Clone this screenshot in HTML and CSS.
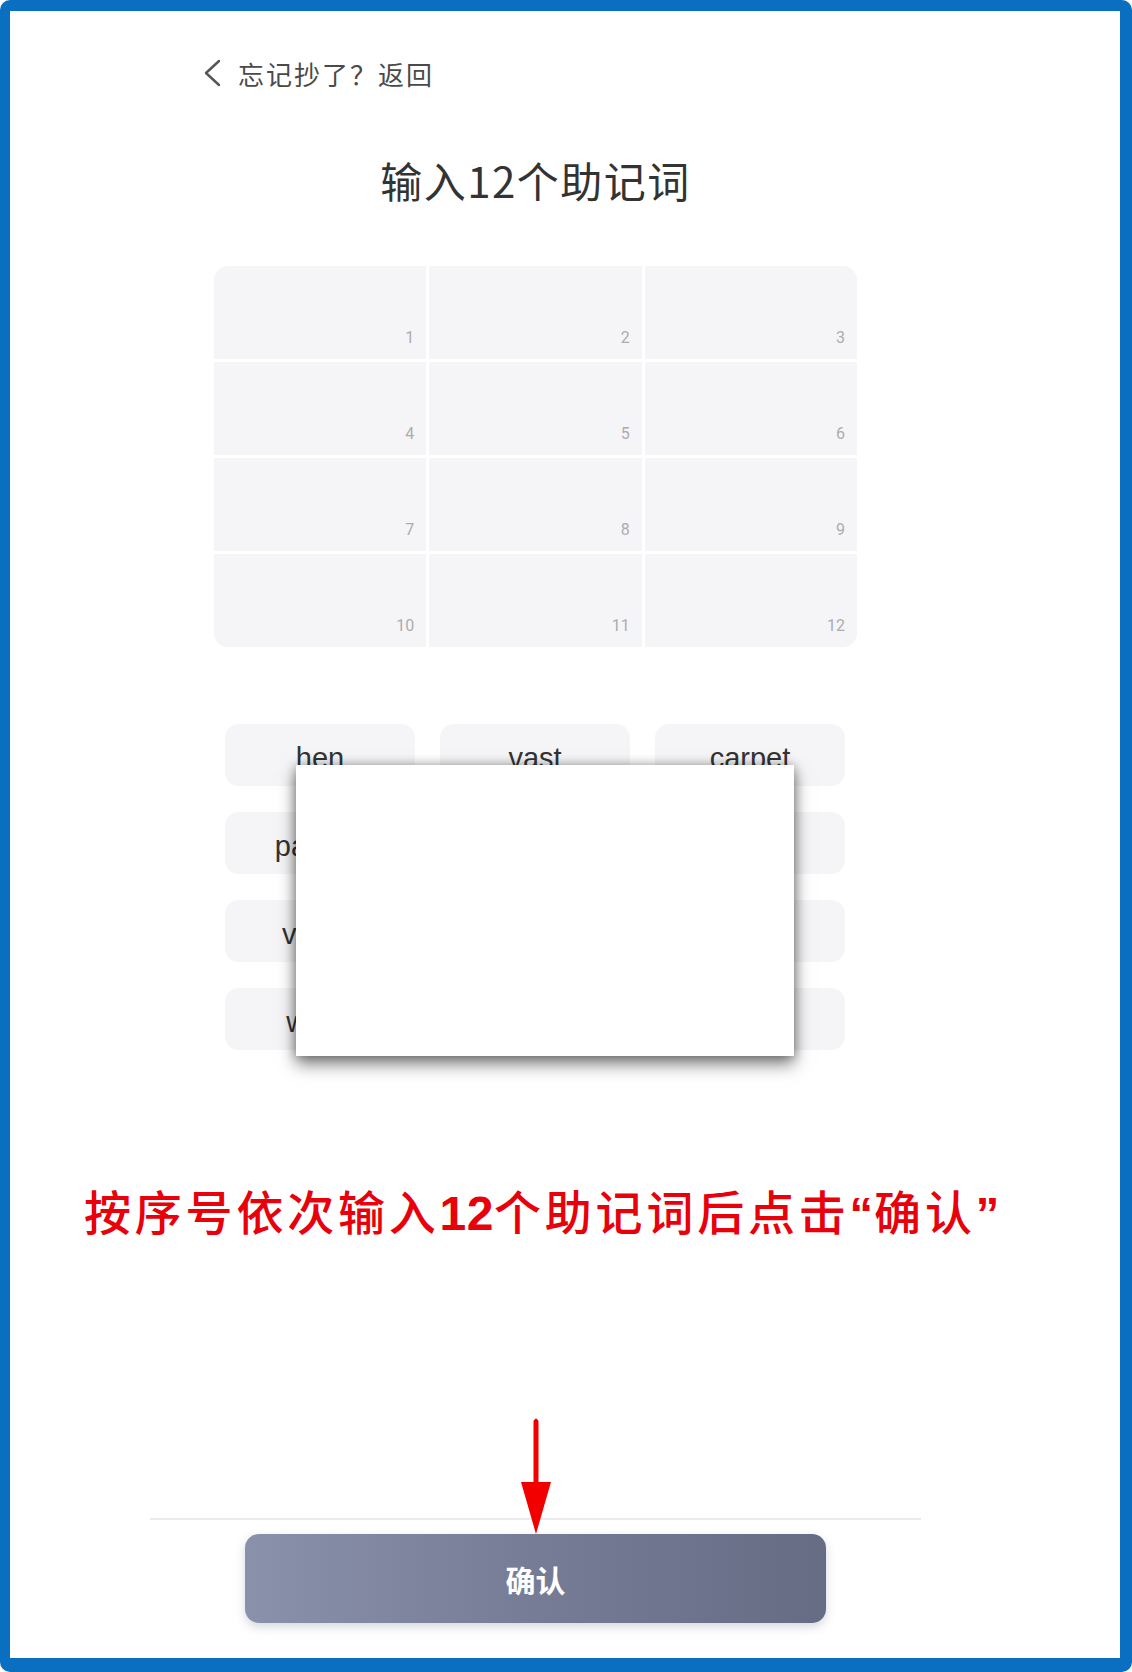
FILE: index.html
```html
<!DOCTYPE html>
<html lang="zh-CN">
<head>
<meta charset="utf-8">
<title>输入12个助记词</title>
<link rel="stylesheet" href="styles.css">
</head>
<body>
<div class="frame">
  <div class="app">
    <div class="back">
      <svg class="chev" width="20" height="28" viewBox="0 0 20 28"><path d="M17 2 L4 14 L17 26" fill="none" stroke="#555" stroke-width="2.4" stroke-linecap="round" stroke-linejoin="round"/></svg>
      <span>忘记抄了？返回</span>
    </div>
    <h1 class="title">输入12个助记词</h1>
    <div class="grid">
      <div class="cell"><span>1</span></div>
      <div class="cell"><span>2</span></div>
      <div class="cell"><span>3</span></div>
      <div class="cell"><span>4</span></div>
      <div class="cell"><span>5</span></div>
      <div class="cell"><span>6</span></div>
      <div class="cell"><span>7</span></div>
      <div class="cell"><span>8</span></div>
      <div class="cell"><span>9</span></div>
      <div class="cell"><span>10</span></div>
      <div class="cell"><span>11</span></div>
      <div class="cell"><span>12</span></div>
    </div>
    <div class="words">
      <div class="pill">hen</div>
      <div class="pill">vast</div>
      <div class="pill">carpet</div>
      <div class="pill">pattern</div>
      <div class="pill">moon</div>
      <div class="pill">sugar</div>
      <div class="pill">velvet</div>
      <div class="pill">tiger</div>
      <div class="pill">ocean</div>
      <div class="pill">wave</div>
      <div class="pill">olive</div>
      <div class="pill">frost</div>
      <div class="popup"></div>
    </div>
  </div>
  <div class="note">按序号依次输入<b>12</b>个助记词后点击<span class="q">“</span>确认<span class="q">”</span></div>
  <div class="footer">
    <svg class="arrow" width="34" height="117" viewBox="0 0 34 117"><path d="M14.5 4 Q17 -1 19.5 4 L19.5 65 L32 65 L17 117 L2 65 L14.5 65 Z" fill="#f20000"/></svg>
    <div class="sep"></div>
    <div class="btn">确认</div>
  </div>
</div>
</body>
</html>
```
FILE: styles.css
```css
html, body {
  margin: 0;
  padding: 0;
  background: #ffffff;
}
body {
  font-family: Roboto, "Noto Sans CJK SC", sans-serif;
}
.frame {
  box-sizing: border-box;
  width: 1132px;
  height: 1672px;
  border-style: solid;
  border-color: #0a6fc0;
  border-width: 11px 12px 14px 10px;
  border-radius: 10px;
  background: #ffffff;
  display: flex;
  flex-direction: column;
}
.app {
  margin-left: 140px;
  width: 771px;
  padding-top: 47px;
}
.back {
  display: flex;
  align-items: center;
  margin-left: 52px;
  height: 30px;
  gap: 16px;
  font-family: "Noto Sans CJK SC", sans-serif;
  font-size: 26px;
  letter-spacing: 2px;
  color: #4a4a4a;
}
.chev {
  display: block;
}
.title {
  margin: 64px 0 0 0;
  height: 56px;
  line-height: 56px;
  text-align: center;
  font-family: "Noto Sans CJK SC", sans-serif;
  font-weight: 400;
  font-size: 42px;
  letter-spacing: 1.5px;
  color: #333333;
}
.grid {
  margin: 58px 0 0 64px;
  width: 643px;
  display: grid;
  grid-template-columns: repeat(3, 1fr);
  grid-template-rows: repeat(4, 93px);
  gap: 3px 3px;
  border-radius: 14px;
  overflow: hidden;
  background: #ffffff;
}
.cell {
  background: #f5f5f7;
  display: flex;
  align-items: flex-end;
  justify-content: flex-end;
  padding: 0 12px 12px 0;
  font-size: 16px;
  color: #acacb0;
}
.words {
  position: relative;
  margin: 77px 0 0 75px;
  width: 620px;
  display: grid;
  grid-template-columns: repeat(3, 1fr);
  grid-template-rows: repeat(4, 62px);
  gap: 26px 25px;
}
.pill {
  background: #f5f5f7;
  border-radius: 14px;
  display: flex;
  align-items: center;
  justify-content: center;
  font-family: "Liberation Sans", Arial, sans-serif;
  font-size: 29px;
  color: #333333;
  padding-top: 6px;
  box-sizing: border-box;
}
.popup {
  position: absolute;
  left: 71px;
  top: 41px;
  width: 498px;
  height: 291px;
  background: #ffffff;
  box-shadow: 0 8px 16px rgba(0, 0, 0, 0.5), 0 0 10px rgba(0, 0, 0, 0.3);
}
.note {
  margin: 130px 0 0 74px;
  height: 60px;
  line-height: 60px;
  font-family: "Noto Sans CJK SC", sans-serif;
  font-weight: 500;
  font-size: 47px;
  letter-spacing: 3.8px;
  color: #e8000b;
  white-space: nowrap;
}
.note b {
  font-family: "Liberation Sans", Arial, sans-serif;
  font-weight: 700;
  font-size: 48px;
  letter-spacing: 0.5px;
}
.note .q {
  font-family: "Liberation Sans", Arial, sans-serif;
  font-weight: 700;
  letter-spacing: 1px;
}
.footer {
  position: relative;
  margin: 278px 0 0 140px;
  width: 771px;
}
.sep {
  height: 2px;
  background: #ebebed;
}
.arrow {
  position: absolute;
  left: 369px;
  top: -101px;
}
.btn {
  margin: 14px 0 0 95px;
  width: 581px;
  height: 89px;
  border-radius: 14px;
  background: linear-gradient(90deg, #8a91aa 0%, #767c96 50%, #676c85 100%);
  box-shadow: 0 4px 10px rgba(90, 100, 130, 0.25);
  display: flex;
  align-items: center;
  justify-content: center;
  font-family: "Noto Sans CJK SC", sans-serif;
  font-weight: 700;
  font-size: 30px;
  color: #ffffff;
}
```
